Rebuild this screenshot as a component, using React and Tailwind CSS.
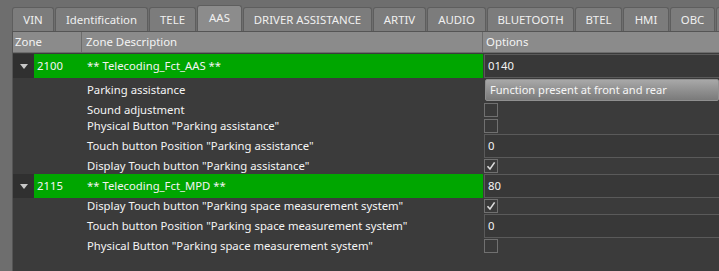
const tabs = [
  { label: "VIN", w: "w-[42px]" },
  { label: "Identification", w: "w-[93px]" },
  { label: "TELE", w: "w-[47px]" },
  { label: "AAS", w: "w-[45px]", active: true },
  { label: "DRIVER ASSISTANCE", w: "w-[129px]" },
  { label: "ARTIV", w: "w-[53px]" },
  { label: "AUDIO", w: "w-[59px]" },
  { label: "BLUETOOTH", w: "w-[87px]" },
  { label: "BTEL", w: "w-[47px]" },
  { label: "HMI", w: "w-[46px]" },
  { label: "OBC", w: "w-[45px]" },
  { label: "", w: "w-[60px]" },
];

const rows = [
  { group: true, zone: "2100", desc: "** Telecoding_Fct_AAS **", type: "edit", value: "0140" },
  { desc: "Parking assistance", type: "combo", value: "Function present at front and rear" },
  { desc: "Sound adjustment", type: "check" },
  { desc: 'Physical Button "Parking assistance"', type: "check" },
  { desc: 'Touch button Position "Parking assistance"', type: "edit", value: "0" },
  { desc: 'Display Touch button "Parking assistance"', type: "check", checked: true },
  { group: true, zone: "2115", desc: "** Telecoding_Fct_MPD **", type: "edit", value: "80" },
  { desc: 'Display Touch button "Parking space measurement system"', type: "check", checked: true },
  { desc: 'Touch button Position "Parking space measurement system"', type: "edit", value: "0" },
  { desc: 'Physical Button "Parking space measurement system"', type: "check" },
];

function Check({ checked }) {
  return (
    <div className="w-[14px] h-[14px] border border-[#707070] bg-[#3a3a3a] flex items-center justify-center">
      {checked && (
        <svg width="10" height="10" viewBox="0 0 10 10">
          <path d="M1.5 5.2 L4 8 L8.6 1.4" fill="none" stroke="#dcdcdc" strokeWidth="1.6" />
        </svg>
      )}
    </div>
  );
}

function Option({ row }) {
  if (row.type === "check") {
    return (
      <div className="h-[16px] flex items-center pl-px">
        <Check checked={row.checked} />
      </div>
    );
  }
  if (row.type === "combo") {
    return (
      <div className="h-[24px] py-px pl-[2px]">
        <div className="h-full bg-gradient-to-b from-[#a8a8a8] to-[#7a7a7a] border border-[#909090] rounded-[2px] flex items-center pl-[4px] text-[#f6f6f6] text-[11.1px]">
          {row.value}
        </div>
      </div>
    );
  }
  return (
    <div className="h-[24px] border-y border-l border-[#5a5a5a] bg-[#383838] flex items-center pl-[3px] text-[#f4f4f4] ml-px">
      {row.value}
    </div>
  );
}

export default function App() {
  return (
    <div
      className="w-[719px] h-[271px] overflow-hidden bg-[#6e6e6e] text-[11.3px] leading-[16px]"
      style={{ fontFamily: '"Noto Sans", "Open Sans", sans-serif' }}
    >
      {/* Tabs */}
      <div className="flex items-end h-[31px] pl-[12px] gap-px">
        {tabs.map((t) => (
          <div
            key={t.label + t.w}
            className={`${t.w} shrink-0 flex items-center justify-center border border-b-0 border-[#5e5e5e] rounded-t-[3px] text-[#f0f0f0] text-[11.4px] ${
              t.active ? "h-[26px] bg-[#8c8c8c] pb-[2px]" : "h-[24px] bg-[#7c7c7c]"
            }`}
          >
            {t.label}
          </div>
        ))}
      </div>

      {/* Tree panel */}
      <div className="ml-[12px] border-l border-t border-[#555555] bg-[#3b3b3b] h-[240px]">
        {/* Header */}
        <div className="flex h-[21px] bg-[#8b8b8b] border-b border-[#6c6c6c] text-[#f4f4f4] text-[11.4px]">
          <div className="w-[69px] shrink-0 border-r border-[#6c6c6c] flex items-center pl-[2px]">Zone</div>
          <div className="w-[401px] shrink-0 border-r border-[#6c6c6c] flex items-center pl-[4px]">Zone Description</div>
          <div className="flex-1 flex items-center pl-[3px]">Options</div>
        </div>

        <div className="pt-px">
          {rows.map((r, i) => (
            <div key={i} className="flex text-[#f4f4f4]">
              <div className={`w-[21px] shrink-0 flex items-center justify-center ${r.group ? "bg-[#303030]" : ""}`}>
                {r.group && (
                  <svg width="8" height="5" viewBox="0 0 8 5">
                    <path d="M0 0 L8 0 L4 5 Z" fill="#c8c8c8" />
                  </svg>
                )}
              </div>
              <div className={`w-[449px] shrink-0 flex items-center ${r.group ? "bg-[#00a600]" : ""}`}>
                <div className="w-[53px] shrink-0 pl-[3px]">{r.zone}</div>
                <div className="whitespace-nowrap">{r.desc}</div>
              </div>
              <div className="flex-1">
                <Option row={r} />
              </div>
            </div>
          ))}
        </div>
      </div>
    </div>
  );
}
